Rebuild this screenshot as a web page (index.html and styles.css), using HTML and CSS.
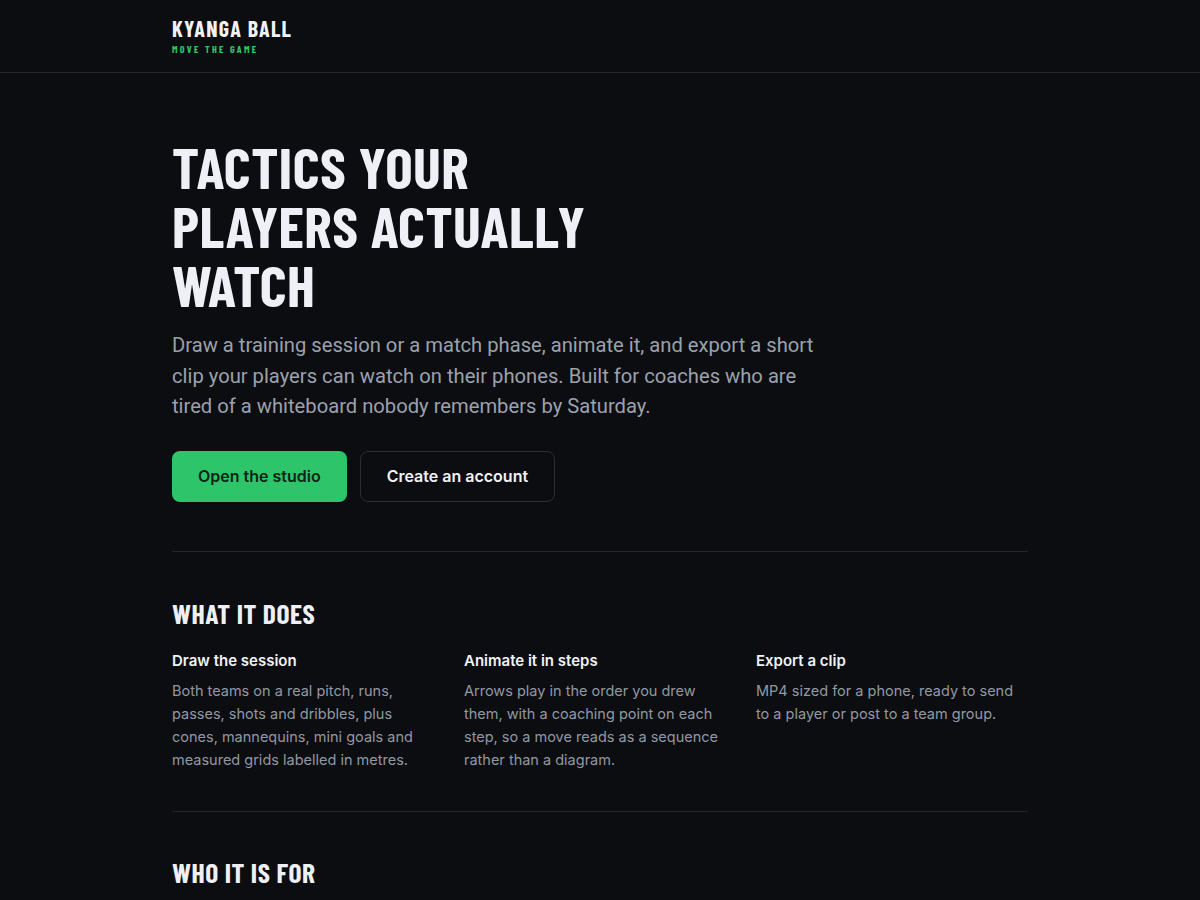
FILE: index.html
```html
<!DOCTYPE html>
<html lang="en">
<head>
<meta charset="utf-8">
<title>Kyanga Ball</title>
<link rel="stylesheet" href="styles.css">
</head>
<body>
<header class="topbar">
  <div class="wrap">
    <a class="brand" href="#">
      <span class="brand-name">KYANGA BALL</span>
      <span class="brand-tag">MOVE THE GAME</span>
    </a>
  </div>
</header>
<main class="wrap">
  <section class="hero">
    <h1 class="hero-title"><span class="line">TACTICS YOUR</span><span class="line">PLAYERS ACTUALLY</span><span class="line">WATCH</span></h1>
    <p class="lead">Draw a training session or a match phase, animate it, and export a short clip your players can watch on their phones. Built for coaches who are tired of a whiteboard nobody remembers by Saturday.</p>
    <div class="actions">
      <a class="btn btn-primary" href="#">Open the studio</a>
      <a class="btn btn-ghost" href="#">Create an account</a>
    </div>
  </section>
  <section class="section">
    <h2 class="section-title">WHAT IT DOES</h2>
    <div class="features">
      <div class="feature">
        <h3>Draw the session</h3>
        <p>Both teams on a real pitch, runs, passes, shots and dribbles, plus cones, mannequins, mini goals and measured grids labelled in metres.</p>
      </div>
      <div class="feature">
        <h3>Animate it in steps</h3>
        <p>Arrows play in the order you drew them, with a coaching point on each step, so a move reads as a sequence rather than a diagram.</p>
      </div>
      <div class="feature">
        <h3>Export a clip</h3>
        <p>MP4 sized for a phone, ready to send to a player or post to a team group.</p>
      </div>
    </div>
  </section>
  <section class="section">
    <h2 class="section-title">WHO IT IS FOR</h2>
  </section>
</main>
</body>
</html>
```
FILE: styles.css
```css
* { box-sizing: border-box; }
html, body { margin: 0; padding: 0; }
body {
  background: #0c0d10;
  color: #f1f2f6;
  font-family: Inter, "Noto Sans", sans-serif;
}
.wrap {
  width: 856px;
  margin: 0 auto;
}
.topbar {
  border-bottom: 1px solid #24262c;
  height: 73px;
}
.topbar .wrap {
  padding-top: 16px;
}
.brand {
  display: flex;
  flex-direction: column;
  text-decoration: none;
}
.brand-name {
  font-family: "Barlow Condensed", "Roboto Condensed", "Liberation Sans Narrow", "DejaVu Sans Condensed", sans-serif;
  font-stretch: condensed;
  font-weight: 700;
  font-size: 22px;
  line-height: 24px;
  letter-spacing: 1.3px;
  color: #f1f2f6;
}
.brand-tag {
  font-family: "Barlow Condensed", "Roboto Condensed", "Liberation Sans Narrow", "DejaVu Sans Condensed", sans-serif;
  font-stretch: condensed;
  font-weight: 700;
  font-size: 10px;
  line-height: 12px;
  letter-spacing: 2.3px;
  color: #2ec56a;
  margin-top: 3px;
}
.hero {
  padding-top: 64px;
  padding-bottom: 49px;
  border-bottom: 1px solid #24262c;
}
.hero-title {
  margin: 0;
  font-family: "Barlow Condensed", "Roboto Condensed", "Liberation Sans Narrow", "DejaVu Sans Condensed", sans-serif;
  font-stretch: condensed;
  font-weight: 700;
  font-size: 58px;
  line-height: 59px;
  letter-spacing: 0.5px;
  color: #eef0f6;
}
.hero-title .line {
  display: block;
}
.lead {
  margin: 16px 0 0;
  max-width: 660px;
  font-family: Roboto, Inter, sans-serif;
  font-size: 20.2px;
  line-height: 30.5px;
  color: #9ba1ad;
}
.actions {
  display: flex;
  gap: 13px;
  margin-top: 29px;
}
.btn {
  display: inline-flex;
  align-items: center;
  justify-content: center;
  height: 51px;
  padding: 0 26px;
  border-radius: 8px;
  font-size: 16px;
  font-weight: 600;
  white-space: nowrap;
  text-decoration: none;
}
.btn-primary {
  background: #2ec56a;
  color: #0c2415;
}
.btn-ghost {
  border: 1px solid #2b2e35;
  color: #f1f2f6;
}
.section {
  padding-top: 45px;
  padding-bottom: 40px;
  border-bottom: 1px solid #24262c;
}
.section:last-child {
  border-bottom: 0;
  padding-top: 44px;
}
.section-title {
  margin: 0;
  font-family: "Barlow Condensed", "Roboto Condensed", "Liberation Sans Narrow", "DejaVu Sans Condensed", sans-serif;
  font-stretch: condensed;
  font-weight: 700;
  font-size: 27.5px;
  line-height: 32px;
  letter-spacing: 0.5px;
  color: #eef0f6;
}
.features {
  display: grid;
  grid-template-columns: repeat(3, 1fr);
  column-gap: 20px;
  margin-top: 21px;
}
.feature h3 {
  margin: 0;
  font-size: 15px;
  font-weight: 600;
  line-height: 22px;
  color: #f1f2f6;
}
.feature p {
  margin: 7px 0 0;
  font-size: 14.5px;
  line-height: 23px;
  color: #9298a3;
  max-width: 260px;
}
```
